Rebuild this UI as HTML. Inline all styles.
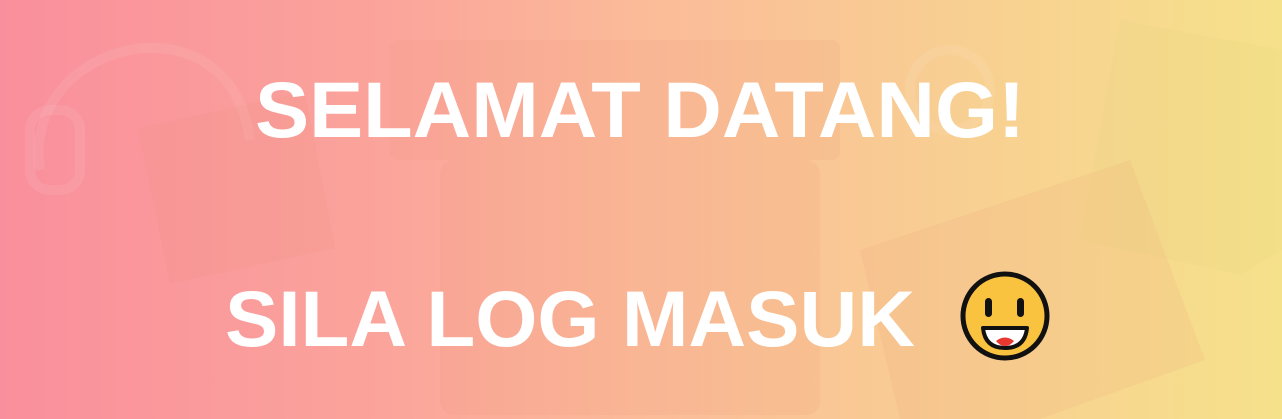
<!DOCTYPE html>
<html><head><style>
html,body{margin:0;padding:0;width:1282px;height:419px;overflow:hidden}
body{background:linear-gradient(90deg,#f98f9c 0%,#fba49b 30%,#fbbb99 50%,#f8cf92 75%,#f6e18b 100%);position:relative}
svg{display:block;overflow:hidden}
</style></head><body>
<svg width="1282" height="419" viewBox="0 0 1282 419" style="position:absolute;left:0;top:0">
<g fill="none" stroke="#ffffff" stroke-opacity="0.08" stroke-width="10">
<path d="M40 170 C20 40 230 -10 250 140"/>
<rect x="30" y="110" width="50" height="80" rx="20"/>
<circle cx="950" cy="90" r="40"/>
</g>
<g fill="#e8866f" fill-opacity="0.1">
<rect x="390" y="40" width="450" height="120" rx="8"/>
<rect x="440" y="160" width="380" height="255" rx="14"/>
<polygon points="138,128 305,92 335,248 170,284"/>
<polygon points="860,250 1130,160 1205,360 1040,419 900,419"/>
<polygon points="1120,20 1282,50 1282,250 1240,275 1080,240" fill="#d8d07a"/>
</g>
<g fill="#ffffff" font-family="Liberation Sans, sans-serif" font-weight="bold">
<text x="255" y="137" font-size="79" textLength="770" lengthAdjust="spacingAndGlyphs">SELAMAT DATANG!</text>
<text x="225" y="346" font-size="79" textLength="690" lengthAdjust="spacingAndGlyphs">SILA LOG MASUK</text>
</g>
<g>
<circle cx="1005" cy="316" r="42" fill="#f9c340" stroke="#111" stroke-width="5"/>
<rect x="985" y="298" width="7" height="19" rx="3.5" fill="#111"/>
<rect x="1017" y="298" width="7" height="19" rx="3.5" fill="#111"/>
<path d="M983 328 L1027 328 Q1025 348 1005 348 Q985 348 983 328 Z" fill="#fff" stroke="#111" stroke-width="4" stroke-linejoin="round"/>
<path d="M996 341 Q1005 334 1014 341 Q1010 346 1005 346 Q1000 346 996 341Z" fill="#e8382f"/>
</g>
</svg>
</body></html>
